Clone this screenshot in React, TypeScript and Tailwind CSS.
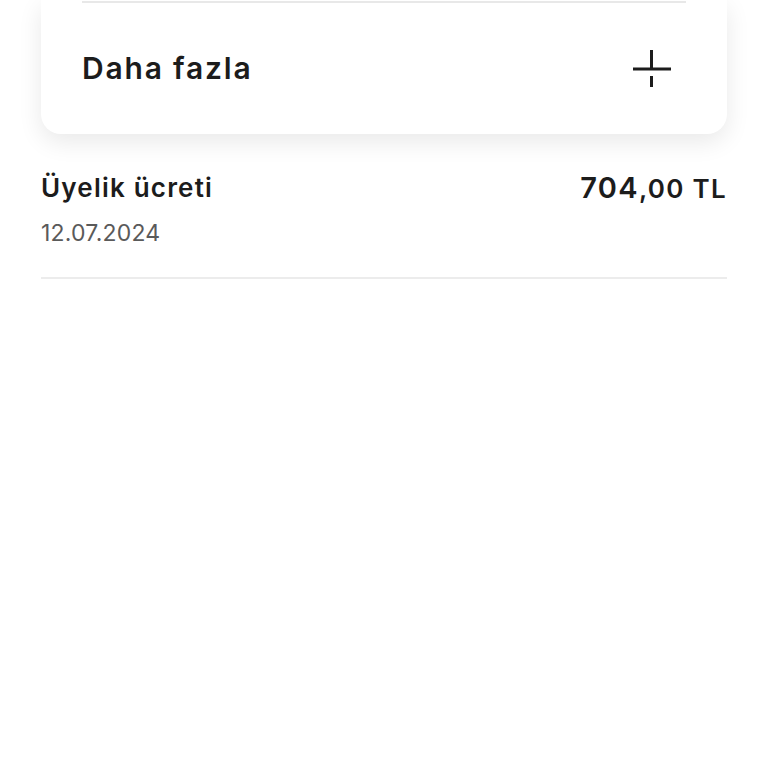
import React from "react";

const PlusIcon = () => (
  <svg width="40" height="40" viewBox="0 0 40 40" fill="none" stroke="#1c1c1c" strokeWidth={3}>
    <path d="M1 20h38" />
    <path d="M19.5 1v19" />
    <path d="M19.5 27v11" />
  </svg>
);

export default function App() {
  return (
    <div
      className="min-h-[768px] w-full bg-white px-[41px] text-[#1c1c1c]"
      style={{ fontFamily: "Inter, 'Noto Sans', sans-serif" }}
    >
      <div className="rounded-b-[20px] bg-white px-[41px] shadow-[0_8px_24px_rgba(0,0,0,0.09)]">
        <div className="pt-[1px]">
          <div className="h-[2px] bg-[#e8e8e8]" />
        </div>
        <div className="flex h-[131px] items-center justify-between pr-[14px]">
          <span className="text-[30px] font-semibold tracking-[1.8px]">Daha fazla</span>
          <PlusIcon />
        </div>
      </div>

      <div className="flex items-start justify-between pt-[34px]">
        <div className="flex flex-col">
          <span className="text-[26px] font-semibold leading-[40px] tracking-[1.2px]">Üyelik ücreti</span>
          <span className="mt-[10px] text-[23px] leading-[30px] tracking-[0.2px] text-[#5a5a5a]">12.07.2024</span>
        </div>
        <div className="flex items-baseline font-semibold leading-[40px] tracking-[1.3px]">
          <span className="text-[29px]">704</span>
          <span className="text-[26px]">,00 TL</span>
        </div>
      </div>
      <div className="mt-[29px] h-[2px] bg-[#ececec]" />
    </div>
  );
}
